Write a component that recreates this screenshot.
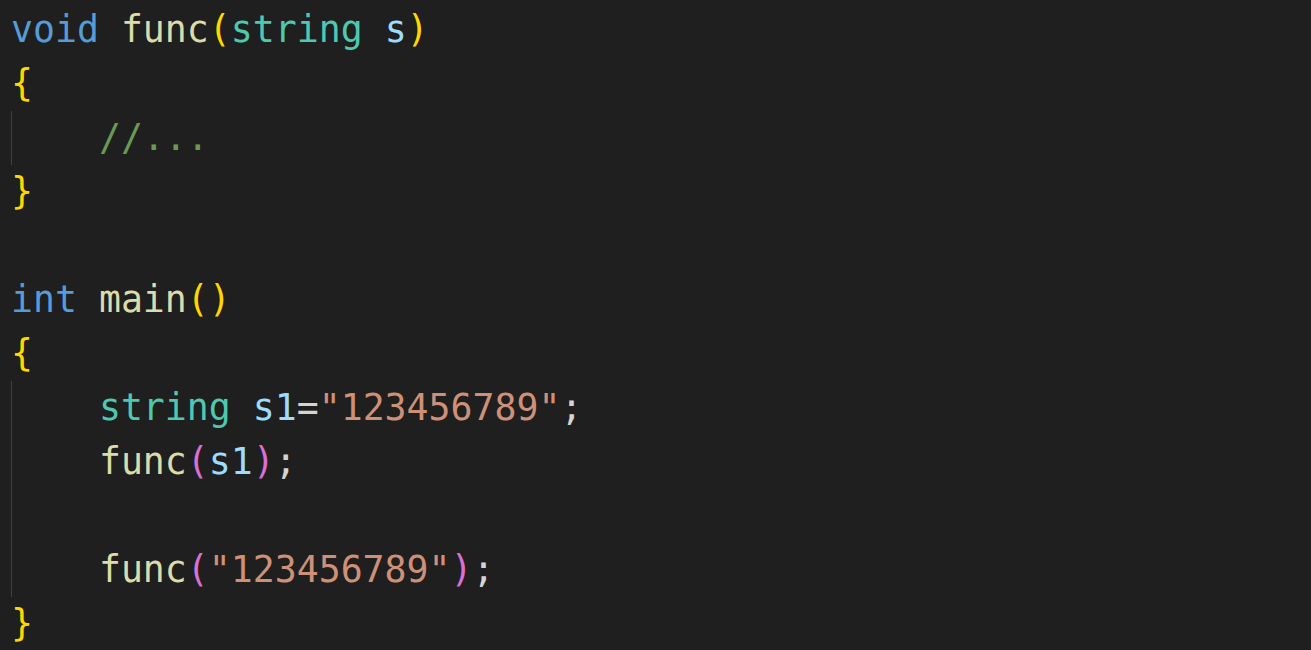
const C = {
  kw: "text-[#569cd6]",
  fn: "text-[#dcdcaa]",
  b1: "text-[#ffd700]",
  b2: "text-[#da70d6]",
  ty: "text-[#4ec9b0]",
  va: "text-[#9cdcfe]",
  cm: "text-[#6a9955]",
  st: "text-[#ce9178]",
  pu: "text-[#d4d4d4]",
};

const lines = [
  { guide: false, parts: [["void", C.kw], [" "], ["func", C.fn], ["(", C.b1], ["string", C.ty], [" "], ["s", C.va], [")", C.b1]] },
  { guide: false, parts: [["{", C.b1]] },
  { guide: true, parts: [["    "], ["//...", C.cm]] },
  { guide: false, parts: [["}", C.b1]] },
  { guide: false, parts: [] },
  { guide: false, parts: [["int", C.kw], [" "], ["main", C.fn], ["()", C.b1]] },
  { guide: false, parts: [["{", C.b1]] },
  { guide: true, parts: [["    "], ["string", C.ty], [" "], ["s1", C.va], ["=", C.pu], ['"123456789"', C.st], [";", C.pu]] },
  { guide: true, parts: [["    "], ["func", C.fn], ["(", C.b2], ["s1", C.va], [")", C.b2], [";", C.pu]] },
  { guide: true, parts: [] },
  { guide: true, parts: [["    "], ["func", C.fn], ["(", C.b2], ['"123456789"', C.st], [")", C.b2], [";", C.pu]] },
  { guide: false, parts: [["}", C.b1]] },
];

const App = () => {
  return (
    <div className="w-[1311px] h-[650px] overflow-hidden bg-[#1f1f1f] pt-[3px] px-[11px] font-['DejaVu_Sans_Mono',monospace] text-[36.5px] leading-[54px]">
      {lines.map((line, i) => (
        <div key={i} className="relative h-[54px] whitespace-pre">
          {line.guide && <div className="absolute left-0 top-0 h-full w-px bg-[#404040]" />}
          {line.parts.map(([t, cls], j) => (
            <span key={j} className={cls || C.pu}>{t}</span>
          ))}
        </div>
      ))}
    </div>
  );
};

export default App;
